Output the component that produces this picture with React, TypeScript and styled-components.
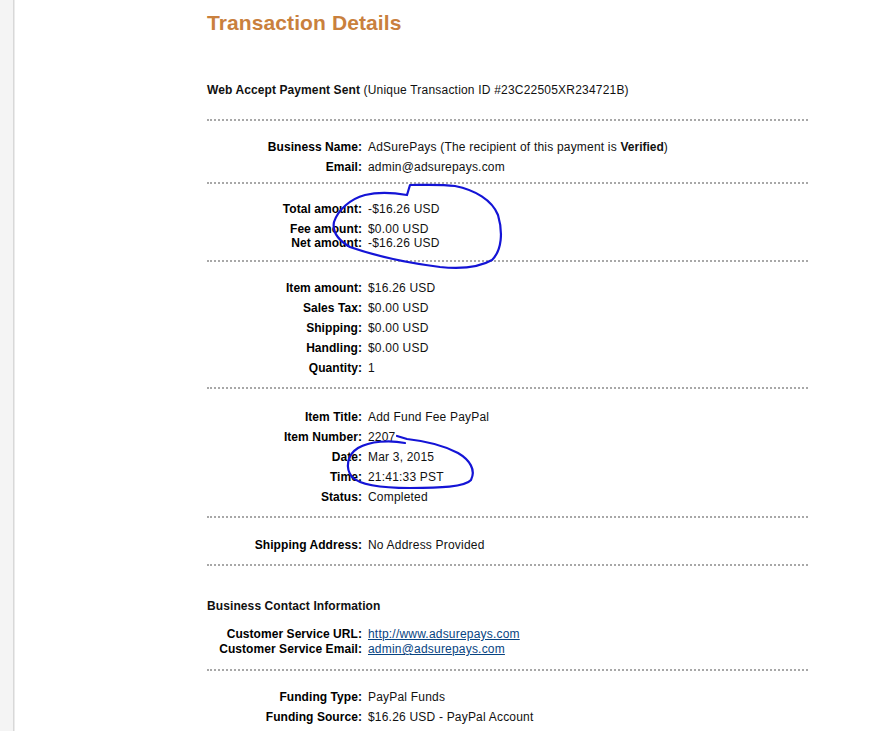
import React from 'react';
import styled, { createGlobalStyle } from 'styled-components';

const GlobalStyle = createGlobalStyle`
    html, body {
        margin: 0;
        padding: 0;
        background: #ffffff;
    }
    body {
        font-family: "Liberation Sans", Arial, sans-serif;
        font-size: 12px;
        color: #111111;
    }
`;

const Page = styled.div`
    display: flex;
    flex-direction: row;
    align-items: stretch;
    min-height: 731px;
    overflow: hidden;
`;

const SideStrip = styled.div`
    flex-shrink: 0;
    width: 13px;
    background-color: #f4f4f4;
    border-right: 1px solid #d8d8d8;
    box-shadow: 1px 0 0 #ebebeb;
`;

const Main = styled.main`
    margin-left: 193px;
    width: 601px;
    flex-shrink: 0;
`;

const Title = styled.h1`
    margin: 11px 0 0 0;
    font-size: 21px;
    line-height: 24px;
    font-weight: bold;
    letter-spacing: 0.1px;
    color: #c9803d;
`;

const Intro = styled.div`
    margin-top: 45px;
    margin-bottom: 19px;
    line-height: 20px;
    letter-spacing: 0.2px;

    b {
        letter-spacing: 0.1px;
    }
`;

const Divider = styled.div`
    height: 0;
    border-top: 2px dotted #a8a8a8;
`;

const Section = styled.div<{ $pt: number; $pb: number }>`
    position: relative;
    padding-top: ${(p) => p.$pt}px;
    padding-bottom: ${(p) => p.$pb}px;
`;

const Heading = styled.div`
    font-weight: bold;
    line-height: 20px;
    letter-spacing: 0.1px;
`;

const Row = styled.div<{ $h: number; $mt: number }>`
    display: grid;
    grid-template-columns: 155px 1fr;
    column-gap: 6px;
    line-height: ${(p) => p.$h}px;
    margin-top: ${(p) => p.$mt}px;
`;

const Label = styled.span`
    text-align: right;
    font-weight: bold;
    color: #000;
    white-space: nowrap;
    letter-spacing: 0.06px;
`;

const Value = styled.span`
    white-space: nowrap;
    letter-spacing: 0.2px;

    b {
        letter-spacing: 0;
    }
`;

const Link = styled.a`
    color: #084482;
    text-decoration: underline;
`;

const Scribble = styled.svg`
    position: absolute;
    left: 0;
    top: 0;
    overflow: visible;
    pointer-events: none;

    path {
        fill: none;
        stroke: #1414d6;
        stroke-width: 2.2;
        stroke-linecap: round;
        stroke-linejoin: round;
    }
`;

interface IRow {
    label: string;
    value: React.ReactNode;
    h?: number;
    mt?: number;
}

const businessRows: IRow[] = [
    { label: 'Business Name:', value: <>AdSurePays (The recipient of this payment is <b>Verified</b>)</> },
    { label: 'Email:', value: 'admin@adsurepays.com' },
];

const amountRows: IRow[] = [
    { label: 'Total amount:', value: '-$16.26 USD' },
    { label: 'Fee amount:', value: '$0.00 USD', h: 14, mt: 3 },
    { label: 'Net amount:', value: '-$16.26 USD', h: 14 },
];

const itemRows: IRow[] = [
    { label: 'Item amount:', value: '$16.26 USD' },
    { label: 'Sales Tax:', value: '$0.00 USD' },
    { label: 'Shipping:', value: '$0.00 USD' },
    { label: 'Handling:', value: '$0.00 USD' },
    { label: 'Quantity:', value: '1' },
];

const detailRows: IRow[] = [
    { label: 'Item Title:', value: 'Add Fund Fee PayPal' },
    { label: 'Item Number:', value: '2207' },
    { label: 'Date:', value: 'Mar 3, 2015' },
    { label: 'Time:', value: '21:41:33 PST' },
    { label: 'Status:', value: 'Completed' },
];

const contactRows: IRow[] = [
    { label: 'Customer Service URL:', value: <Link href="#">http://www.adsurepays.com</Link>, h: 15, mt: 11 },
    { label: 'Customer Service Email:', value: <Link href="#">admin@adsurepays.com</Link>, h: 15 },
];

const fundingRows: IRow[] = [
    { label: 'Funding Type:', value: 'PayPal Funds' },
    { label: 'Funding Source:', value: '$16.26 USD - PayPal Account' },
];

function Rows({ rows }: { rows: IRow[] }) {
    return (
        <>
            {rows.map((r) => (
                <Row key={r.label} $h={r.h ?? 20} $mt={r.mt ?? 0}>
                    <Label>{r.label}</Label>
                    <Value>{r.value}</Value>
                </Row>
            ))}
        </>
    );
}

// hand-drawn pen marks over the amounts / date
function AmountScribble() {
    return (
        <Scribble width="601" height="100" viewBox="207 184 601 100">
            <path d="M407,195 C395,193 378,192 365,195 C350,199 338,210 334,222 C332,232 338,240 350,247 C370,254 400,262 440,267 C460,269 480,267 492,260 C502,250 503,232 498,215 C492,200 475,190 455,186 C440,184 420,185 410,185 L407,195" />
        </Scribble>
    );
}

function DateScribble() {
    return (
        <Scribble width="601" height="120" viewBox="207 389 601 120">
            <path d="M405,443 C390,440 370,441 358,448 C347,455 345,468 352,477 C360,485 380,488 410,488 C440,488 465,487 471,480 C476,470 470,460 458,453 C445,446 425,441 407,439 L397,436" />
        </Scribble>
    );
}

export default function App() {
    return (
        <>
            <GlobalStyle />
            <Page>
                <SideStrip />
                <Main>
                    <Title>Transaction Details</Title>
                    <Intro>
                        <b>Web Accept Payment Sent</b> (Unique Transaction ID #23C22505XR234721B)
                    </Intro>
                    <Divider />
                    <Section $pt={16} $pb={5}>
                        <Rows rows={businessRows} />
                    </Section>
                    <Divider />
                    <Section $pt={15} $pb={10}>
                        <Rows rows={amountRows} />
                        <AmountScribble />
                    </Section>
                    <Divider />
                    <Section $pt={16} $pb={9}>
                        <Rows rows={itemRows} />
                    </Section>
                    <Divider />
                    <Section $pt={18} $pb={9}>
                        <Rows rows={detailRows} />
                        <DateScribble />
                    </Section>
                    <Divider />
                    <Section $pt={17} $pb={9}>
                        <Rows rows={[{ label: 'Shipping Address:', value: 'No Address Provided' }]} />
                    </Section>
                    <Divider />
                    <Section $pt={30} $pb={12}>
                        <Heading>Business Contact Information</Heading>
                        <Rows rows={contactRows} />
                    </Section>
                    <Divider />
                    <Section $pt={16} $pb={9}>
                        <Rows rows={fundingRows} />
                    </Section>
                </Main>
            </Page>
        </>
    );
}
